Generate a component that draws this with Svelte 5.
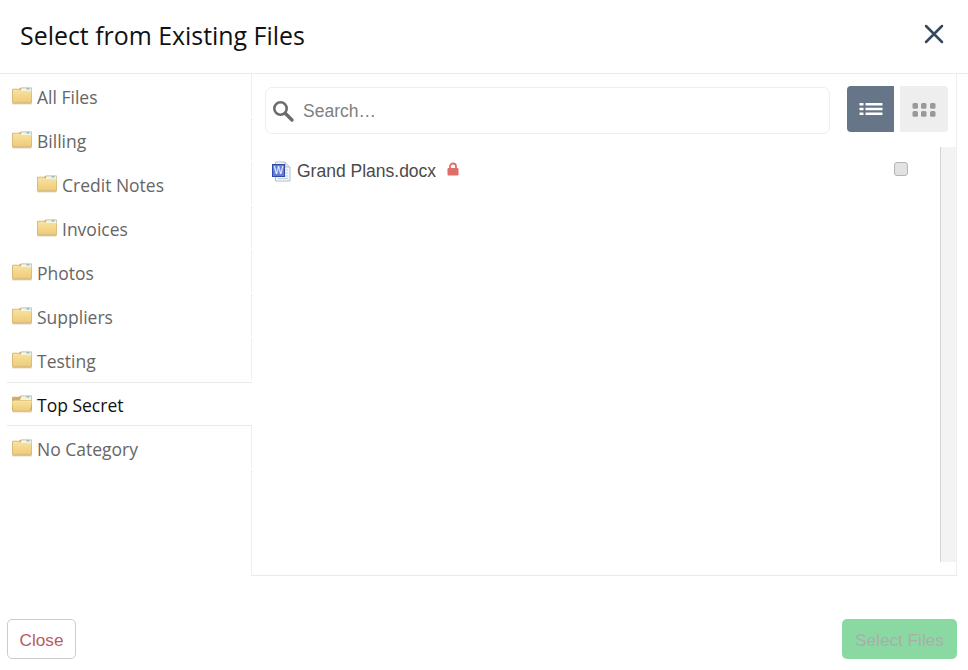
<script>
  const folders = [
    { name: 'All Files' },
    { name: 'Billing' },
    { name: 'Credit Notes', child: true },
    { name: 'Invoices', child: true },
    { name: 'Photos' },
    { name: 'Suppliers' },
    { name: 'Testing' },
    { name: 'Top Secret', active: true },
    { name: 'No Category' }
  ];
</script>

<div class="modal">
  <header class="head">
    <h1>Select from Existing Files</h1>
    <button class="x" aria-label="Close">
      <svg width="20" height="20" viewBox="0 0 20 20"><path d="M2 2 L18 18 M18 2 L2 18" stroke="#34495e" stroke-width="2.500" stroke-linecap="round" fill="none"/></svg>
    </button>
  </header>

  <div class="body">
    <nav class="side">
      {#each folders as f}
        <div class="item" class:child={f.child} class:active={f.active}>
          <svg class="folder" width="20" height="18" viewBox="0 0 20 18">
            <defs>
              <linearGradient id="fg" x1="0" y1="0" x2="0" y2="1">
                <stop offset="0" stop-color="#f8e3a2"/>
                <stop offset="1" stop-color="#eecb78"/>
              </linearGradient>
            </defs>
            <rect x="0.500" y="15.500" width="19" height="1.800" fill="#c8ad78" opacity=".75"/>
            <path d="M0 3 Q0 1.800 1.200 1.800 H7 L9 0.600 H19 Q20 0.600 20 1.600 V15.800 H0 Z" fill="#cfae6c"/>
            <path d="M9.500 1.200 H19.400 V5 H8 Z" fill="#f7f3e3"/>
            <rect x="14.500" y="1.100" width="3" height="1.500" fill="#78c6d8"/>
            {#if f.active}
              <path d="M0 7 Q0.400 5.500 2 5.500 H20 L18 15.800 H1.500 Z" fill="url(#fg)"/>
            {:else}
              <path d="M0.700 3.500 Q0.700 2.500 1.700 2.500 H7 L9 4 H19.400 V15.300 H0.700 Z" fill="url(#fg)"/>
            {/if}
          </svg>
          <span class="label">{f.name}</span>
        </div>
      {/each}
      <div class="rest"></div>
    </nav>

    <section class="main">
      <div class="tools">
        <div class="search">
          <svg width="24" height="24" viewBox="0 0 24 24"><circle cx="9.500" cy="9.500" r="6.200" fill="none" stroke="#6b6b6b" stroke-width="2.600"/><path d="M14.200 14.200 L21 21" stroke="#6b6b6b" stroke-width="3.400" stroke-linecap="round"/></svg>
          <span class="ph">Search…</span>
        </div>
        <button class="view on" aria-label="List view">
          <svg width="24" height="16" viewBox="0 0 24 16" fill="#fff">
            <rect x="0.500" y="2" width="4" height="2.500" rx=".5"/><rect x="6.500" y="2" width="17" height="2.500" rx=".5"/>
            <rect x="0.500" y="6.800" width="4" height="2.500" rx=".5"/><rect x="6.500" y="6.800" width="17" height="2.500" rx=".5"/>
            <rect x="0.500" y="11.500" width="4" height="2.500" rx=".5"/><rect x="6.500" y="11.500" width="17" height="2.500" rx=".5"/>
          </svg>
        </button>
        <button class="view off" aria-label="Grid view">
          <svg width="24" height="15" viewBox="0 0 24 15" fill="#999">
            <rect x="0.500" y="1" width="5.500" height="5.800" rx="1.500"/><rect x="9" y="1" width="5.500" height="5.800" rx="1.500"/><rect x="18" y="1" width="5.500" height="5.800" rx="1.500"/>
            <rect x="0.500" y="9" width="5.500" height="5.800" rx="1.500"/><rect x="9" y="9" width="5.500" height="5.800" rx="1.500"/><rect x="18" y="9" width="5.500" height="5.800" rx="1.500"/>
          </svg>
        </button>
      </div>

      <div class="list">
        <div class="rows">
          <div class="file">
            <svg class="doc" width="19" height="21" viewBox="0 0 19 21">
              <path d="M3.500 1 H13 L18 6 V20 H3.500 Z" fill="#f2f6fa" stroke="#b4c0cc"/>
              <path d="M13 1 V6 H18" fill="#dbe4ee" stroke="#b4c0cc"/>
              <path d="M13 9 H16 M13 12 H16 M13 15 H16 M6 17.500 H16" stroke="#bcd0e0"/>
              <rect x="0.500" y="3.500" width="12" height="12" fill="#5f7fd0" stroke="#2f49ab"/>
              <text x="6.500" y="13" class="w">W</text>
            </svg>
            <span class="fname">Grand Plans.docx</span>
            <svg class="lock" width="12" height="14" viewBox="0 0 12 14">
              <path d="M3 6.500 V4.500 a3 3 0 0 1 6 0 V6.500" fill="none" stroke="#df6d68" stroke-width="1.800"/>
              <rect x="0.500" y="6" width="11" height="7.500" rx="1.200" fill="#df6d68"/>
            </svg>
            <span class="check"></span>
          </div>
        </div>
        <div class="track"></div>
      </div>
    </section>
  </div>

  <footer class="foot">
    <button class="close">Close</button>
    <button class="select" disabled>Select Files</button>
  </footer>
</div>

<style>
  :global(body) {
    margin: 0;
    background: #fff;
  }
  .modal {
    width: 968px;
    height: 670px;
    display: flex;
    flex-direction: column;
    font-family: "Liberation Sans", Arial, sans-serif;
    overflow: hidden;
  }
  .head {
    height: 73px;
    box-sizing: border-box;
    display: flex;
    align-items: center;
    justify-content: space-between;
    padding: 0 24px 1px 20px;
    flex: none;
  }
  h1 {
    margin: 0;
    font: 400 24.900px/1.2 "Open Sans", sans-serif;
    color: #111;
  }
  .x {
    border: 0;
    background: none;
    padding: 0;
    width: 20px;
    height: 20px;
    display: block;
    margin-top: -4px;
  }
  .body {
    display: flex;
    border-top: 1px solid #e9e9e9;
    height: 502px;
    flex: none;
    padding-left: 7px;
    padding-right: 11px;
  }
  .side {
    width: 245px;
    flex: none;
    display: flex;
    flex-direction: column;
  }
  .item {
    height: 44px;
    flex: none;
    box-sizing: border-box;
    display: flex;
    align-items: center;
    padding-left: 5px;
    gap: 5px;
    font: 400 17.500px "Open Sans", sans-serif;
    color: #666;
    position: relative;
  }
  .label {
    padding-top: 2px;
  }
  .item::after {
    content: "";
    position: absolute;
    right: 0;
    top: 0;
    bottom: 2px;
    width: 1px;
    background: #eee;
  }
  .item.child {
    padding-left: 30px;
  }
  .item.active {
    color: #111;
    border-top: 1px solid #e9e9e9;
    border-bottom: 1px solid #e9e9e9;
  }
  .item.active::after {
    display: none;
  }
  .rest {
    flex: 1;
    border-right: 1px solid #eee;
  }
  .folder {
    flex: none;
  }
  .main {
    flex: 1;
    min-width: 0;
    border-right: 1px solid #eee;
    border-bottom: 1px solid #e9e9e9;
    display: flex;
    flex-direction: column;
  }
  .tools {
    display: flex;
    align-items: flex-start;
    padding: 12px 8px 0 13px;
    height: 73px;
    box-sizing: border-box;
    flex: none;
  }
  .search {
    width: 565px;
    height: 47px;
    box-sizing: border-box;
    margin-top: 1px;
    border: 1px solid #eee;
    border-radius: 7px;
    display: flex;
    align-items: center;
    padding-left: 5px;
    gap: 8px;
    margin-right: 17px;
  }
  .search svg {
    flex: none;
  }
  .ph {
    font-size: 17.500px;
    color: #808080;
    padding-top: 1px;
  }
  .view {
    width: 47px;
    height: 46px;
    border: 0;
    padding: 0;
    display: flex;
    align-items: center;
    justify-content: center;
  }
  .view.on {
    background: #667587;
    border-radius: 4px 0 0 4px;
    margin-right: 6px;
  }
  .view.off {
    width: 48px;
    background: #eee;
    border-radius: 0 4px 4px 0;
  }
  .list {
    flex: 1;
    display: flex;
    min-height: 0;
  }
  .rows {
    flex: 1;
    min-width: 0;
    padding-top: 14px;
    margin-bottom: 13px;
  }
  .file {
    display: flex;
    align-items: center;
    height: 20px;
    padding-left: 20px;
    position: relative;
  }
  .doc {
    flex: none;
    margin-right: 6px;
  }
  .w {
    font: 400 10px "Liberation Sans", sans-serif;
    fill: #fff;
    text-anchor: middle;
  }
  .fname {
    font-size: 17.500px;
    color: #4a4a4a;
  }
  .lock {
    margin-left: 11px;
    margin-top: -4px;
    flex: none;
  }
  .check {
    position: absolute;
    left: 642px;
    top: 1px;
    width: 14px;
    height: 14px;
    box-sizing: border-box;
    border: 1px solid #b4b4b4;
    border-radius: 3px;
    background: #e2e2e2;
  }
  .track {
    width: 16px;
    flex: none;
    box-sizing: border-box;
    background: #f3f3f3;
    border-left: 1px solid #d4d4d4;
    margin-bottom: 13px;
  }
  .foot {
    flex: 1;
    display: flex;
    justify-content: space-between;
    align-items: flex-start;
    padding: 43px 11px 0 7px;
  }
  .foot button {
    height: 40px;
    font: 400 17.200px "Liberation Sans", Arial, sans-serif;
    border-radius: 5px;
    padding: 3px 0 0;
    box-sizing: border-box;
  }
  .close {
    width: 69px;
    background: #fff;
    border: 1px solid #ccc;
    color: #b85c5c;
  }
  .select {
    width: 115px;
    background: #8ad9a3;
    border: 0;
    color: #a9aeaa;
  }
</style>
